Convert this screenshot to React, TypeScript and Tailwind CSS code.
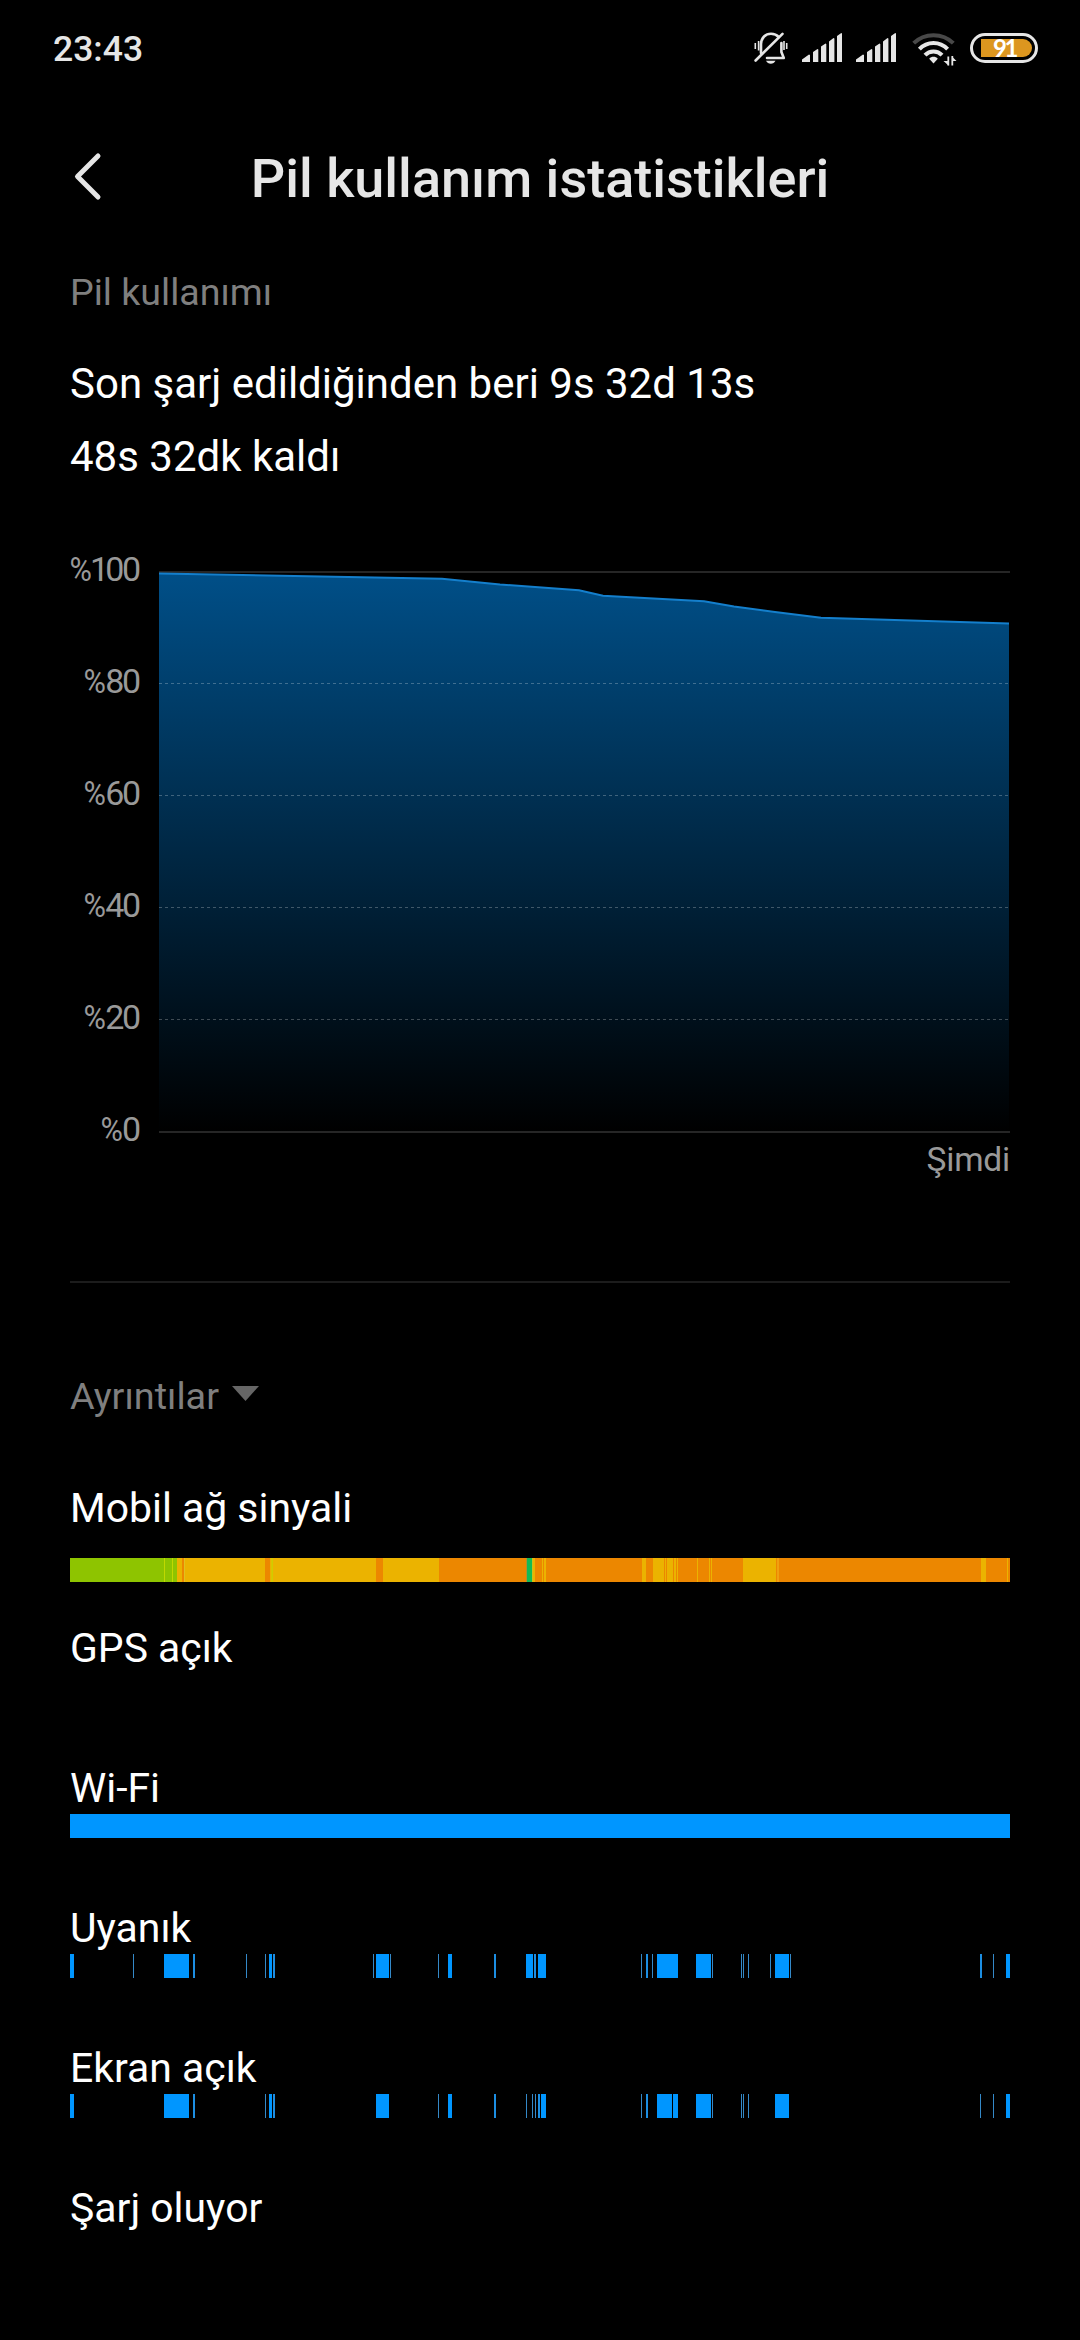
type Span = [number, number];
type Band = [number, number, string];

const GREEN = '#8ec400';
const LIME = '#c0d800';
const AMBER = '#ebb300';
const ORANGE = '#ec8700';

const signalBands: Band[] = [
  [0, 94, GREEN], [94, 95, LIME], [95, 102, GREEN], [102, 103, LIME], [103, 107, GREEN],
  [107, 112, AMBER], [112, 114, ORANGE], [114, 115, '#e0c020'], [115, 195, AMBER], [195, 200, ORANGE],
  [200, 201, AMBER], [201, 202, '#dcc400'], [202, 203, '#d0cc00'], [203, 306, AMBER], [306, 313, ORANGE],
  [313, 369, AMBER], [369, 456, ORANGE], [456, 457, '#b09030'], [457, 462, '#13ba55'], [462, 463, '#c8c020'],
  [463, 465, AMBER], [465, 472, ORANGE], [472, 473, AMBER], [473, 474, ORANGE], [474, 476, AMBER],
  [476, 572, ORANGE], [572, 576, AMBER], [576, 583, ORANGE], [583, 594, AMBER], [594, 595, ORANGE],
  [595, 596, AMBER], [596, 597, ORANGE], [597, 603, AMBER], [603, 604, ORANGE], [604, 606, AMBER],
  [606, 607, ORANGE], [607, 608, AMBER], [608, 627, ORANGE], [627, 628, AMBER], [628, 639, ORANGE],
  [639, 640, AMBER], [640, 641, ORANGE], [641, 642, AMBER], [642, 673, ORANGE], [673, 706, AMBER],
  [706, 707, ORANGE], [707, 709, '#f0a010'], [709, 911, ORANGE], [911, 916, AMBER], [916, 937, ORANGE],
  [937, 938, AMBER], [938, 940, ORANGE],
];

const awake: Span[] = [
  [0, 4], [63, 64], [94, 119], [123, 125], [176, 177], [195, 196], [199, 202], [203, 205], [303, 304],
  [306, 319], [320, 321], [368, 369], [378, 382], [424, 426], [456, 463], [464, 466], [468, 476],
  [571, 572], [576, 578], [582, 583], [587, 608], [626, 641], [642, 643], [671, 672], [673, 674],
  [678, 679], [700, 701], [705, 719], [720, 721], [910, 912], [923, 924], [936, 940],
];

const screenOn: Span[] = [
  [0, 4], [94, 119], [123, 125], [195, 196], [199, 202], [203, 205], [306, 319], [368, 369], [378, 382],
  [424, 426], [456, 457], [462, 463], [465, 466], [468, 470], [471, 476], [571, 572], [576, 578],
  [587, 602], [603, 608], [626, 641], [642, 643], [671, 672], [673, 674], [678, 679], [705, 719],
  [910, 911], [923, 924], [936, 940],
];

const toBands = (spans: Span[]): Band[] =>
  spans.map(([a, b]) => [a, b, b - a === 1 ? '#3489c8' : b - a === 2 ? '#1c8ee2' : '#0096ff']);

function Timeline({ bands }: { bands: Band[] }) {
  return (
    <svg className="block h-6 w-[940px]" viewBox="0 0 940 24" shapeRendering="crispEdges">
      {bands.map(([a, b, c]) => (
        <rect key={a} x={a} y={0} width={b - a} height={24} fill={c} />
      ))}
    </svg>
  );
}

function Detail({ label, bands, low }: { label: string; bands?: Band[]; low?: boolean }) {
  return (
    <div className="h-[140px]">
      <div className="h-[60px] text-[40.9px] leading-[60px] whitespace-nowrap text-white">{label}</div>
      {bands && (
        <div className={low ? 'pt-[20px]' : '-mt-1'}>
          <Timeline bands={bands} />
        </div>
      )}
    </div>
  );
}

function MutedBell() {
  return (
    <svg className="h-9 w-9" viewBox="0 0 36 36" fill="none" stroke="#e6e6e6" strokeWidth="2.6" strokeLinecap="round" strokeLinejoin="round">
      <path d="M8 23V14C8.300 7.700 12.500 3.800 18 3.800c3.500 0 6 1.300 7.800 3.300" />
      <path d="M28.400 13V22l2.400 6H14" />
      <path d="M29.500 3.800L2.600 30.500" />
      <path d="M2.300 13v6M5.600 11v9.500M33.700 13v6M31 11v9" strokeWidth="1.600" strokeLinecap="butt" />
      <path d="M13 30.700h9.500c-1 2-2.600 3-4.700 3s-3.800-1-4.800-3z" fill="#e6e6e6" stroke="none" />
    </svg>
  );
}

function Signal() {
  return (
    <svg className="h-[30px] w-10" viewBox="0 0 40 30" fill="#e6e6e6">
      <path d="M0 29V26.500L7 21.500L8 22V29zM11 29V19l4.500-3 .8.500V29zM19 29V13.500L23.500 10.500l.8.500V29zM27 29V8.500L31.500 5l.9.600V29zM35 29V3L39.300 0 40 .5V29z" />
    </svg>
  );
}

function Wifi() {
  return (
    <svg className="h-9 w-[46px]" viewBox="0 0 46 36" fill="none" stroke="#e6e6e6" strokeWidth="4">
      <path d="M1.700 13.200C12.500 2.500 30.500 2.500 41.300 13.200" stroke="#484848" />
      <path d="M7.400 19.200c7.800-8.200 20.400-8.200 28.200 0" />
      <path d="M13 25.200c4.700-5 12.300-5 17 0" />
      <path d="M17.200 28.700c2.300-2.500 6.300-2.500 8.600 0L21.500 33.500z" fill="#e6e6e6" stroke="none" />
      <path d="M36.300 35.500V26.500M40.300 26V35.500" strokeWidth="1.800" />
      <path d="M36.500 35.500v-4.500h-5zM40 26.500v4.500h4.500z" fill="#e6e6e6" stroke="none" />
    </svg>
  );
}

function Battery() {
  return (
    <div className="flex h-[30px] w-[68px] rounded-full border-[3px] border-[#e6e6e6] py-[3px] pr-[3px] pl-2">
      <div className="flex h-[18px] w-[51px] items-center rounded-r-full bg-[#dc961f] pl-[12px] font-['Lato'] text-[24px] leading-[18px] font-bold tracking-[-2.5px] text-white">
        91
      </div>
    </div>
  );
}

function Percent() {
  return <span className="inline-block origin-right scale-x-90 tracking-[-1px]">%</span>;
}

function LevelChart() {
  const line = 'M0 60.500L283 65.700L341 71.500L420 77.200L444 82.700L545 88.200L575 93.500L616 99L662 104.700L850 110.500';
  return (
    <svg className="block h-[672px] w-[851px]" viewBox="0 0 851 672">
      <defs>
        <linearGradient id="level" gradientUnits="userSpaceOnUse" x1="0" y1="60" x2="0" y2="619">
          <stop offset="0" stopColor="#004f88" />
          <stop offset="1" stopColor="#000000" />
        </linearGradient>
      </defs>
      <rect x="0" y="58" width="851" height="2" fill="#262626" />
      <path d={line + 'V619H0Z'} fill="url(#level)" />
      <path d={line} fill="none" stroke="#147fcc" strokeWidth="2" />
      {[170, 282, 394, 506].map((y) => (
        <path key={y} d={`M0 ${y + 0.5}H850`} stroke="#ffffff" strokeOpacity="0.25" strokeDasharray="3 3" />
      ))}
      <rect x="0" y="618" width="851" height="2" fill="#262626" />
    </svg>
  );
}

export default function App() {
  return (
    <div className="h-[2340px] w-[1080px] overflow-hidden bg-black font-['Roboto',sans-serif]">
      <div className="flex h-[98px] items-center justify-between pr-[42px] pl-[53px]">
        <div className="text-[35.5px] leading-[38px] font-medium text-[#e6e6e6]">23:43</div>
        <div className="-mt-[2px] flex items-center">
          <MutedBell />
          <div className="ml-[13px] flex gap-[14px]">
            <Signal />
            <Signal />
          </div>
          <div className="ml-4 flex">
            <Wifi />
          </div>
          <div className="ml-[12px]">
            <Battery />
          </div>
        </div>
      </div>

      <header className="grid h-[160px] grid-cols-[110px_1fr_110px] items-center">
        <svg className="-mt-[5px] ml-[70px] h-[50px] w-8" viewBox="0 0 32 50" fill="none" stroke="#e6e6e6" strokeWidth="5" strokeLinecap="round" strokeLinejoin="round">
          <path d="M28 5L7.500 25.500L28 46" />
        </svg>
        <h1 className="text-center text-[54px] font-medium whitespace-nowrap text-[#e6e6e6]">Pil kullanım istatistikleri</h1>
      </header>

      <main className="px-[70px]">
        <h2 className="h-[70px] text-[37.6px] leading-[68px] text-[#7f7f7f]">Pil kullanımı</h2>
        <div className="pt-[19px] text-[42px] leading-[73px] text-white">
          <p>Son şarj edildiğinden beri 9s 32d 13s</p>
          <p>48s 32dk kaldı</p>
        </div>

        <section className="mt-5 flex h-[770px] border-b-2 border-[#1c1c1c]">
          <div className="-ml-[10px] w-20 pr-px text-right text-[34px] tracking-[-2.2px] whitespace-nowrap text-[#999999]">
            <div className="h-[112px] leading-[112px]">
              <Percent />
              <span className="ml-[-1px] tracking-[-4px]">1</span>00
            </div>
            {['80', '60', '40', '20', '0'].map((t) => (
              <div key={t} className="h-[112px] leading-[112px]">
                <Percent />
                {t}
              </div>
            ))}
          </div>
          <div className="ml-[19px]">
            <LevelChart />
            <div className="-mt-[45px] text-right text-[33.5px] leading-[40px] tracking-[-0.2px] text-[#999999]">Şimdi</div>
          </div>
        </section>

        <h2 className="flex h-[113px] items-end gap-[13px] text-[37.8px] leading-[0px] text-[#7f7f7f]">
          <span>Ayrıntılar</span>
          <svg className="mb-[-5px] h-[15px] w-[27px]" viewBox="0 0 27 15">
            <path d="M0 0H27L13.500 15z" fill="#666666" />
          </svg>
        </h2>

        <section className="mt-[82px]">
          <Detail label="Mobil ağ sinyali" bands={signalBands} low />
          <Detail label="GPS açık" />
          <Detail label="Wi-Fi" bands={[[0, 940, '#0096ff']]} />
          <Detail label="Uyanık" bands={toBands(awake)} />
          <Detail label="Ekran açık" bands={toBands(screenOn)} />
          <Detail label="Şarj oluyor" />
        </section>
      </main>
    </div>
  );
}
